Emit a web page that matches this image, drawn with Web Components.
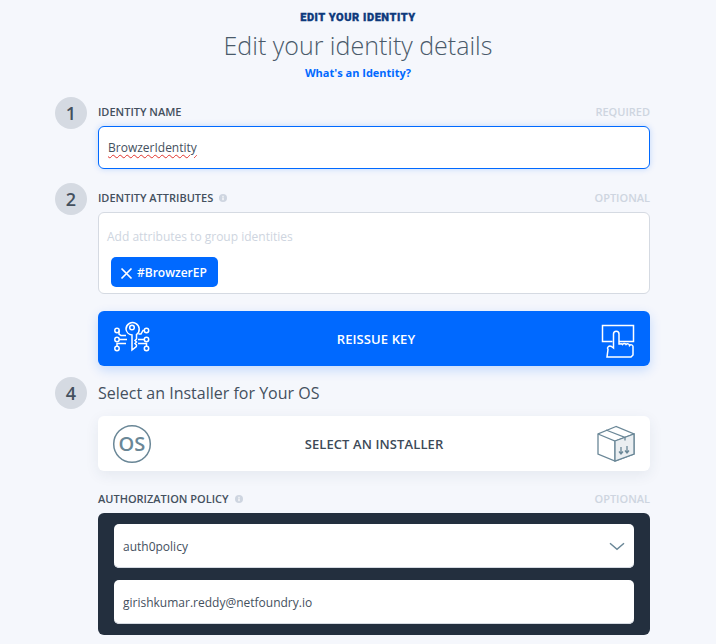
<!DOCTYPE html>
<html><head><meta charset="utf-8"><style>
html,body{margin:0;padding:0;background:#f5f7fc;font-family:"Open Sans","Liberation Sans",sans-serif;color:#232f3e}
body{width:716px;height:644px;overflow:hidden}
</style></head><body>
<template id="t-page"><style>
:host{display:flex;flex-direction:column;padding:0 66px 0 55px;box-sizing:border-box;width:716px}
header{display:flex;flex-direction:column;align-items:center;margin-left:-55px;margin-right:-66px;width:716px;height:97px;box-sizing:border-box;padding-top:10px}
.k{font:900 11px/15px Roboto,"Liberation Sans",sans-serif;letter-spacing:.55px;color:#0e3a7c;-webkit-text-stroke:.35px #0e3a7c;}
h1{margin:3px 0 0;font:300 25px/34px "Open Sans",sans-serif;color:#4a5a6a}
.w{font:700 11px/15px "Open Sans",sans-serif;color:#0069ff;margin-top:3px}
</style><header><div class="k">EDIT YOUR IDENTITY</div><h1>Edit your identity details</h1><div class="w">What's an Identity?</div></header><slot></slot></template>

<template id="t-step"><style>
:host{display:grid;grid-template-columns:32px 1fr;column-gap:11px;align-items:start}
.n{width:32px;height:32px;border-radius:50%;background:#d5dae2;color:#44505e;font:600 18px/32px "Open Sans",sans-serif;text-align:center}
.n.e{visibility:hidden}
</style><div class="n" id="n"></div><div><slot></slot></div></template>

<template id="t-label"><style>
:host{display:flex;justify-content:space-between;align-items:center;height:29px;font:600 11px/15px "Open Sans",sans-serif;color:#44505e}
.l{display:flex;align-items:center;gap:6px}
.r{color:#ced5e0}
svg{display:block}
</style><div class="l"><slot></slot><svg id="i" width="8" height="8" viewBox="0 0 8 8"><circle cx="4" cy="4" r="4" fill="#ced5e0"/><rect x="3.4" y="3.4" width="1.2" height="2.8" fill="#fff"/><rect x="3.4" y="1.8" width="1.2" height="1.1" fill="#fff"/></svg></div><div class="r" id="r"></div></template>

<template id="t-name"><style>
:host{display:flex;align-items:center;height:43px;box-sizing:border-box;padding:0 9px;background:#fff;border:1px solid #0069ff;border-radius:6px;box-shadow:0 0 6px rgba(0,105,255,.22);font:400 12px/17px "Open Sans",sans-serif;color:#44505e}
span{text-decoration:underline wavy #e0332b 1px;text-underline-offset:2px}
</style><span><slot></slot></span></template>

<template id="t-attrs"><style>
:host{display:block;height:82px;box-sizing:border-box;background:#fff;border:1px solid #d5dae2;border-radius:6px;padding:15px 8px 0 8px}
.p{font:400 12px/17px "Open Sans",sans-serif;color:#ced5e0}
.s{margin:12px 0 0 4px;display:flex}
</style><div class="p" id="p"></div><div class="s"><slot></slot></div></template>

<template id="t-tag"><style>
:host{display:inline-flex;align-items:center;gap:4px;height:30px;width:107px;box-sizing:border-box;padding:0 0 0 9px;background:#0069ff;color:#fff;border-radius:5px;font:600 12px/17px "Open Sans",sans-serif}
svg{display:block;margin-top:2px}
</style><svg width="13" height="13" viewBox="0 0 13 13"><path d="M1.5 1.5l10 10M11.5 1.5l-10 10" stroke="#fff" stroke-width="1.7" fill="none"/></svg><slot></slot></template>

<template id="t-action"><style>
:host{display:flex;align-items:center;justify-content:space-between;height:55px;box-sizing:border-box;padding:0 14px 0 14px;border-radius:6px;font:600 13px/18px "Open Sans",sans-serif;letter-spacing:.1px}
:host([kind=primary]){background:#0069ff;color:#fff;box-shadow:0 4px 12px rgba(0,105,255,.2)}
:host([kind=plain]){background:#fff;color:#3d4a58;box-shadow:0 4px 14px rgba(40,60,90,.08)}
.t{flex:1;text-align:center}
::slotted(svg){display:block}
</style><slot name="a"></slot><div class="t"><slot></slot></div><slot name="b"></slot></template>

<template id="t-policy"><style>
:host{display:flex;flex-direction:column;gap:12px;padding:11px 16px;background:#232f3e;border-radius:6px;height:122px;box-sizing:border-box}
</style><slot></slot></template>

<template id="t-field"><style>
:host{display:flex;align-items:center;justify-content:space-between;height:44px;box-sizing:border-box;padding:0 9px;background:#fff;border-radius:5px;font:400 12px/17px "Open Sans",sans-serif;color:#44505e;box-shadow:inset 0 -1px 0 #d5dae2}
svg{display:block}
.c{display:none}
:host([select]) .c{display:block}
</style><span><slot></slot></span><svg class="c" width="16" height="9" viewBox="0 0 16 9"><path d="M1 1.2l7 6 7-6" stroke="#6a8797" stroke-width="1.5" fill="none"/></svg></template>

<id-page>
<id-step num="1"><id-label req="REQUIRED" noinfo>IDENTITY NAME</id-label><id-name>BrowzerIdentity</id-name></id-step>
<id-step num="2" style="margin-top:14px"><id-label req="OPTIONAL">IDENTITY ATTRIBUTES</id-label><id-attrs placeholder="Add attributes to group identities"><id-tag>#BrowzerEP</id-tag></id-attrs></id-step>
<id-step style="margin-top:17px"><id-action kind="primary">REISSUE KEY
<svg slot="a" width="40" height="40" viewBox="0 0 40 40" fill="none" stroke="#fff" stroke-width="1.5"><path d="M14.5 10a6.6 6.6 0 1 1 10.500 5.500V20l-1.500 1.500 1.500 1.500-1.500 1.500 1.500 1.500-.2 1.600-4.300 3.400V16a6.600 6.600 0 0 1-6-6z" transform="translate(-.5 0)"/><circle cx="20" cy="8.500" r="2.300"/><circle cx="5" cy="11.500" r="2.200"/><circle cx="5" cy="20.500" r="2.200"/><circle cx="5" cy="29.500" r="2.200"/><circle cx="34.500" cy="11.500" r="2.200"/><circle cx="34.500" cy="20.500" r="2.200"/><circle cx="34.500" cy="29.500" r="2.200"/><path d="M7 11.500v3.500l2 1.500h5M7.200 20.500H15M5 27.300v-2.800h9M32.300 11.500H31l-2 3.500h-2.500M32.300 20.500H26M34.500 27.300V24.500H26"/></svg>
<svg slot="b" width="36" height="40" viewBox="0 0 36 40" fill="none" stroke="#fff" stroke-width="1.5"><path d="M12.500 22.500H2.500V6.500h31v16H19"/><path d="M7 38h24l2-2V27.500a2 2 0 0 0-3.500-1 2 2 0 0 0-3.500-1 2 2 0 0 0-3.500 0 2 2 0 0 0-2.500-.5h-1V15a2.700 2.700 0 0 0-5.500 0v14l-2-1.500c-2.500-1.500-5 1-3.500 3z"/></svg></id-action></id-step>
<id-step num="4" style="margin-top:11px"><div style="height:39px;font:400 16px/32px 'Open Sans',sans-serif;color:#44505e">Select an Installer for Your OS</div><id-action kind="plain">SELECT AN INSTALLER
<svg slot="a" width="40" height="40" viewBox="0 0 40 40" fill="none" stroke="#6a8797"><circle cx="20" cy="20" r="18.300" stroke-width="1.500"/><text x="20" y="27" text-anchor="middle" fill="#6a8797" stroke="none" font-family="Open Sans" font-weight="600" font-size="20">OS</text></svg>
<svg slot="b" width="40" height="40" viewBox="0 0 40 40" fill="none" stroke="#6a8797" stroke-width="1.300"><path d="M20 2.500L2 10v20l17 7 19-7V10z" fill="#fff"/><path d="M38 10l-19 7L2 10M19 17v20"/><path d="M19 17l19-7v20l-19 7z" fill="#eaeef1"/><path d="M10 6l19 7.500v3"/><path d="M25 23v7m-2-2.500 2 2.500 2-2.500M31 22v7m-2-2.500 2 2.500 2-2.500"/></svg></id-action></id-step>
<id-step style="margin-top:13px"><id-label req="OPTIONAL">AUTHORIZATION POLICY</id-label><id-policy><id-field select>auth0policy</id-field><id-field>girishkumar.reddy@netfoundry.io</id-field></id-policy></id-step>
</id-page>
<script>
function def(name,tid,init){customElements.define(name,class extends HTMLElement{constructor(){super();this.attachShadow({mode:'open'}).appendChild(document.getElementById(tid).content.cloneNode(true));}connectedCallback(){init&&init(this)}})}
def('id-page','t-page');
def('id-step','t-step',e=>{const n=e.shadowRoot.getElementById('n');const v=e.getAttribute('num');if(v)n.textContent=v;else n.classList.add('e')});
def('id-label','t-label',e=>{e.shadowRoot.getElementById('r').textContent=e.getAttribute('req')||'';if(e.hasAttribute('noinfo'))e.shadowRoot.getElementById('i').remove()});
def('id-name','t-name');
def('id-attrs','t-attrs',e=>{e.shadowRoot.getElementById('p').textContent=e.getAttribute('placeholder')});
def('id-tag','t-tag');
def('id-action','t-action');
def('id-policy','t-policy');
def('id-field','t-field');
</script>
</body></html>
